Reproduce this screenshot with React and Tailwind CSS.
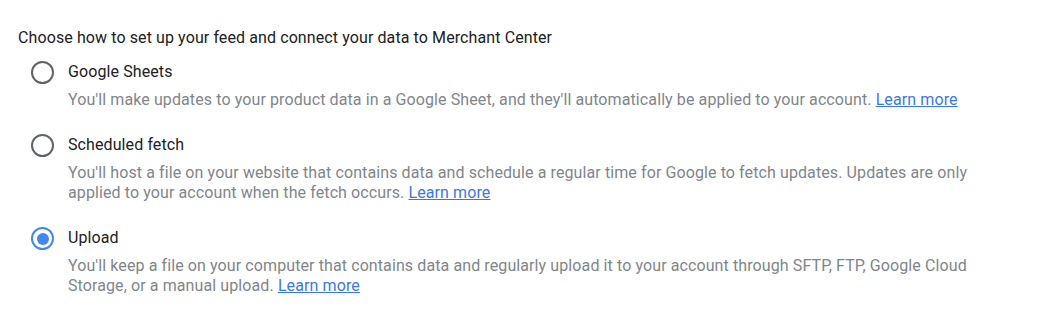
import React, { useState } from "react";

const options = [
  {
    id: "sheets",
    label: "Google Sheets",
    text: "You'll make updates to your product data in a Google Sheet, and they'll automatically be applied to your account.",
  },
  {
    id: "fetch",
    label: "Scheduled fetch",
    text: "You'll host a file on your website that contains data and schedule a regular time for Google to fetch updates. Updates are only applied to your account when the fetch occurs.",
  },
  {
    id: "upload",
    label: "Upload",
    text: "You'll keep a file on your computer that contains data and regularly upload it to your account through SFTP, FTP, Google Cloud Storage, or a manual upload.",
  },
];

const Radio = ({ checked }) => (
  <span
    className={
      checked
        ? "flex h-[23px] w-[23px] shrink-0 items-center justify-center rounded-full border-[2.5px] border-[#4285f4]"
        : "flex h-[23px] w-[23px] shrink-0 items-center justify-center rounded-full border-[2.5px] border-[#5f6368]"
    }
  >
    {checked && <span className="h-[12px] w-[12px] rounded-full bg-[#4285f4]" />}
  </span>
);

const App = () => {
  const [selected, setSelected] = useState("upload");

  return (
    <div className="min-h-[310px] bg-white pl-[18px] pt-[26px] font-['Roboto',sans-serif] text-[16px] tracking-[0.1px] text-[#202124]">
      <div className="leading-[24px]">
        Choose how to set up your feed and connect your data to Merchant Center
      </div>
      <div className="mt-[10px] flex flex-col gap-[23px] pl-[13px]">
        {options.map((opt) => (
          <div key={opt.id} className="flex items-start gap-[14px]">
            <button
              type="button"
              className="mt-[1px] flex h-[23px] items-center"
              onClick={() => setSelected(opt.id)}
            >
              <Radio checked={selected === opt.id} />
            </button>
            <div className="w-[905px]">
              <div className="leading-[24px]">{opt.label}</div>
              <p className="mt-[6px] leading-[20px] text-[#80868b]">
                {opt.text}{" "}
                <a href="#" className="text-[#3b78e7] underline">
                  Learn more
                </a>
              </p>
            </div>
          </div>
        ))}
      </div>
    </div>
  );
};

export default App;
